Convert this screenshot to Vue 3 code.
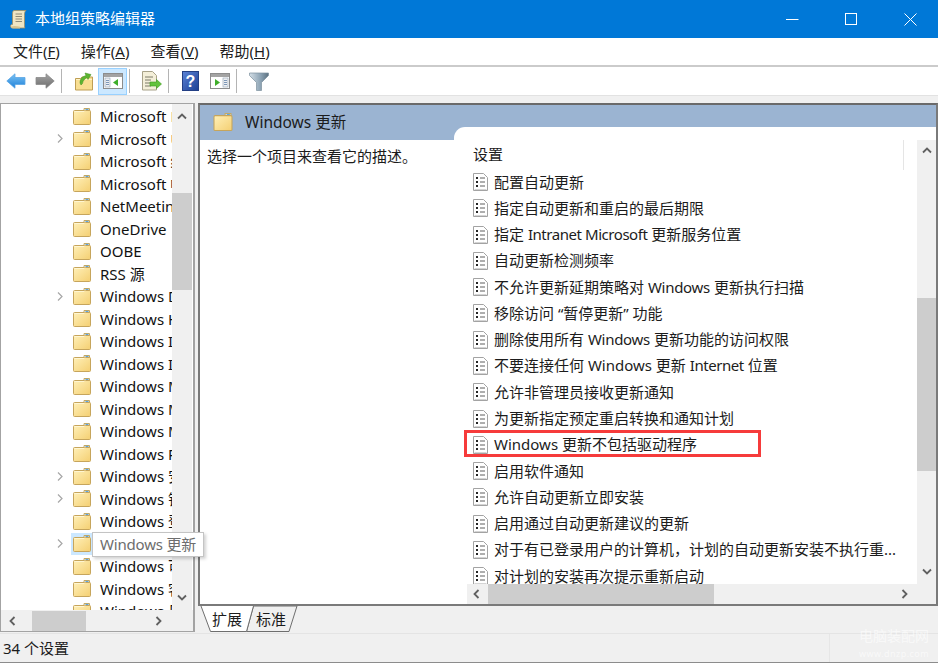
<script setup>
const treeRows = [
  { t: 'Microsoft Edge' }, { t: 'Microsoft User Experience', c: 1 }, { t: 'Microsoft 终结点' }, { t: 'Microsoft 帐户' },
  { t: 'NetMeeting' }, { t: 'OneDrive' }, { t: 'OOBE' }, { t: 'RSS 源' },
  { t: 'Windows Defender', c: 1 }, { t: 'Windows Hello' }, { t: 'Windows Ink' }, { t: 'Windows Installer' },
  { t: 'Windows Mail' }, { t: 'Windows Media' }, { t: 'Windows Messenger' }, { t: 'Windows PowerShell' },
  { t: 'Windows 安全中心', c: 1 }, { t: 'Windows 错误报告', c: 1 }, { t: 'Windows 登录选项' },
  { t: 'Windows 更新', c: 1, hover: 1 }, { t: 'Windows 可靠性' }, { t: 'Windows 客户体验' }, { t: 'Windows 日历' },
]
const items = [
  { a: '配置自动更新' },
  { a: '指定自动更新和重启的最后期限' },
  { a: '指定 ', tight: 'Intranet Microsoft', b: ' 更新服务位置' },
  { a: '自动更新检测频率' },
  { a: '不允许更新延期策略对 ', tight: 'Windows', b: ' 更新执行扫描' },
  { a: '移除访问 “暂停更新” 功能' },
  { a: '删除使用所有 ', tight: 'Windows', b: ' 更新功能的访问权限' },
  { a: '不要连接任何 Windows 更新 ', tight: 'Internet', b: ' 位置' },
  { a: '允许非管理员接收更新通知' },
  { a: '为更新指定预定重启转换和通知计划' },
  { a: 'Windows 更新不包括驱动程序' },
  { a: '启用软件通知' },
  { a: '允许自动更新立即安装' },
  { a: '启用通过自动更新建议的更新' },
  { a: '对于有已登录用户的计算机，计划的自动更新安装不执行重...' },
  { a: '对计划的安装再次提示重新启动' },
]
</script>

<template>
  <div class="win">
    <header class="title">
      <svg class="t-icon" width="18" height="21" viewBox="0 0 18 21">
        <path d="M4 1.500h12c-1.500 1-1.500 3-1.500 5v9c0 2 0 3 .5 3.500H3c-2 0-2.500-1-2.500-2 0-.8.7-1.500 1.500-1.500h.5V5C2.500 3 3 1.500 4 1.500z" fill="#efe5c3" stroke="#a08e62" stroke-width=".8"/>
        <path d="M1 17.500c3-1 6-.5 9 .3v1.700H3c-1.500 0-2-1-2-2z" fill="#d6c48f"/>
        <path d="M5.500 5h6.500M5.500 7.500h6.500M5.500 10h6.500M5.500 12.500h6.500" stroke="#8f8a78" stroke-width="1"/>
      </svg>
      <span class="t-text">本地组策略编辑器</span>
      <div class="controls">
        <svg width="13" height="13" viewBox="0 0 13 13"><path d="M0 6.500h12.500" stroke="#fff" stroke-width="1"/></svg>
        <svg width="13" height="13" viewBox="0 0 13 13"><rect x=".5" y=".5" width="11" height="11" fill="none" stroke="#fff"/></svg>
        <svg width="13" height="13" viewBox="0 0 13 13"><path d="M.5.500l12 12M12.500.500l-12 12" stroke="#fff" stroke-width="1"/></svg>
      </div>
    </header>

    <nav class="menu">
      <span>文件(<u>F</u>)</span><span>操作(<u>A</u>)</span><span>查看(<u>V</u>)</span><span>帮助(<u>H</u>)</span>
    </nav>

    <div class="toolbar">
      <div class="btn">
        <svg width="20" height="16" viewBox="0 0 20 16"><defs><linearGradient id="ba" x1="0" y1="0" x2="0" y2="1"><stop offset="0" stop-color="#7cc4f5"/><stop offset="1" stop-color="#1c7fd8"/></linearGradient></defs><path d="M.8 8L9 .8V4.500h10v7H9v3.700z" fill="url(#ba)" stroke="#5aa6e4" stroke-width=".8" stroke-linejoin="round"/></svg>
      </div>
      <div class="btn">
        <svg width="20" height="16" viewBox="0 0 20 16"><defs><linearGradient id="bf" x1="0" y1="0" x2="0" y2="1"><stop offset="0" stop-color="#a5a5a5"/><stop offset="1" stop-color="#6c6c6c"/></linearGradient></defs><path d="M19.200 8L11 .8V4.500H1v7h10v3.700z" fill="url(#bf)" stroke="#8a8a8a" stroke-width=".8" stroke-linejoin="round"/></svg>
      </div>
      <i class="sep"></i>
      <div class="btn">
        <svg width="18" height="19" viewBox="0 0 18 19"><path d="M.5 6.500h5l1.500-1.500h10.500v13H.5z" fill="#f8de92" stroke="#bf9e54"/><path d="M1 7.500h16" stroke="#fff3c6"/><path d="M5 11C5 6 8 4.500 11 3.500L10 1l6 1.500-3 5-1-2C10 7 8 8 7.500 11.500L6 13z" fill="#5cb531" stroke="#3d8d1d" stroke-width=".5"/></svg>
      </div>
      <div class="btn on">
        <svg width="20" height="16" viewBox="0 0 20 16"><rect x=".5" y=".5" width="19" height="15" fill="#fff" stroke="#8c8c8c"/><rect x="1" y="1" width="18" height="3" fill="#a3a3a3"/><rect x="2" y="5" width="5" height="9" fill="#eef0f2" stroke="#8fa0b3" stroke-width=".6"/><path d="M3 7.500h3M3 9.500h3M3 11.500h3" stroke="#7d97b8"/><path d="M15 6v7l-5-3.500z" fill="#3fae2a"/></svg>
      </div>
      <i class="sep"></i>
      <div class="btn">
        <svg width="21" height="20" viewBox="0 0 21 20"><path d="M1.500.500h10l4 4v14.500h-14z" fill="#f4efd9" stroke="#a8a289"/><path d="M4 6h8M4 9h6M4 12h5M4 15h6" stroke="#7d7a68"/><path d="M20.500 13l-5-4.500v2.500H9v4h6.500v2.500z" fill="#62c23b" stroke="#3e9a1f" stroke-width=".6"/></svg>
      </div>
      <i class="sep"></i>
      <div class="btn">
        <svg width="17" height="20" viewBox="0 0 17 20"><defs><linearGradient id="hp" x1="0" y1="0" x2="1" y2="1"><stop offset="0" stop-color="#5b83d6"/><stop offset="1" stop-color="#1c3f93"/></linearGradient></defs><rect x=".5" y=".5" width="16" height="19" fill="url(#hp)" stroke="#233f84"/><text x="8.500" y="15.500" text-anchor="middle" font-family="Liberation Sans" font-weight="700" font-size="16" fill="#fff">?</text></svg>
      </div>
      <div class="btn">
        <svg width="20" height="16" viewBox="0 0 20 16"><rect x=".5" y=".5" width="19" height="15" fill="#fff" stroke="#8c8c8c"/><rect x="1" y="1" width="18" height="3" fill="#a3a3a3"/><rect x="13" y="5" width="5" height="9" fill="#eef0f2" stroke="#8fa0b3" stroke-width=".6"/><path d="M14 7.500h3M14 9.500h3M14 11.500h3" stroke="#7d97b8"/><path d="M5 6v7l5-3.500z" fill="#3fae2a"/></svg>
      </div>
      <i class="sep"></i>
      <div class="btn">
        <svg width="20" height="19" viewBox="0 0 20 19"><defs><linearGradient id="fl" x1="0" y1="0" x2="1" y2="0"><stop offset="0" stop-color="#d3dee6"/><stop offset=".6" stop-color="#8ba2b3"/><stop offset="1" stop-color="#5c7180"/></linearGradient></defs><path d="M.5 1h19v2.500L12.500 10.500v8h-5v-8L.5 3.500z" fill="url(#fl)" stroke="#7d909e" stroke-width=".7"/></svg>
      </div>
    </div>

    <div class="band"></div>

    <main class="main">
      <section class="left">
        <div class="left-top">
          <div class="tree">
            <div v-for="r in treeRows" :key="r.t" class="row">
              <span class="chev-box">
                <svg v-if="r.c" width="6" height="9" viewBox="0 0 6 9"><path d="M1 .5l4 4-4 4" fill="none" stroke="#a6a6a6" stroke-width="1.200"/></svg>
              </span>
              <span class="fw" :class="{ hot: r.hover }">
                <svg width="18" height="17" viewBox="0 0 18 17"><defs><linearGradient id="fd" x1="0" y1="0" x2="1" y2="1"><stop offset="0" stop-color="#fff0b8"/><stop offset="1" stop-color="#f4cf72"/></linearGradient></defs><path d="M11 .5h5.500v3H11z" fill="#e9eef2" stroke="#c5a860"/><path d="M12.500 1.500h3" stroke="#5fa6dc" stroke-width="1.200"/><rect x=".5" y="2.500" width="17" height="14" rx="1" fill="url(#fd)" stroke="#c6a55c"/><path d="M1.500 3.500h9.500l1-1" fill="none" stroke="#fff6d2"/></svg>
              </span>
              <span class="row-t">{{ r.t }}</span>
            </div>
          </div>
          <div class="vbar">
            <svg class="ar-up" width="10" height="7" viewBox="0 0 10 7"><path d="M1 5.500l4-4 4 4" fill="none" stroke="#606060" stroke-width="1.800"/></svg>
            <div class="vthumb-l"></div>
            <svg class="ar-dn-l" width="10" height="7" viewBox="0 0 10 7"><path d="M1 1.500l4 4 4-4" fill="none" stroke="#606060" stroke-width="1.800"/></svg>
          </div>
        </div>
        <div class="hbar-l">
          <svg class="ar-l" width="7" height="10" viewBox="0 0 7 10"><path d="M5.500 1l-4 4 4 4" fill="none" stroke="#606060" stroke-width="1.800"/></svg>
          <div class="hthumb-l"></div>
          <svg class="ar-r" width="7" height="10" viewBox="0 0 7 10"><path d="M1.500 1l4 4-4 4" fill="none" stroke="#606060" stroke-width="1.800"/></svg>
        </div>
      </section>

      <section class="pane">
        <div class="box">
          <div class="head">
            <svg class="head-fold" width="20" height="18" viewBox="0 0 18 17"><defs><linearGradient id="fh" x1="0" y1="0" x2="1" y2="1"><stop offset="0" stop-color="#fff0b8"/><stop offset="1" stop-color="#f4cf72"/></linearGradient></defs><path d="M11 .5h5.500v3H11z" fill="#e9eef2" stroke="#c5a860"/><path d="M12.500 1.500h3" stroke="#5fa6dc" stroke-width="1.200"/><rect x=".5" y="2.500" width="17" height="14" rx="1" fill="url(#fh)" stroke="#c6a55c"/></svg>
            <span class="head-t">Windows 更新</span>
            <div class="head-tab"></div>
          </div>
          <div class="body">
            <div class="desc">选择一个项目来查看它的描述。</div>
            <div class="set">
              <div class="set-top">
                <div class="list">
                  <div class="list-h"><span>设置</span><i class="hdiv"></i></div>
                  <div v-for="(it, i) in items" :key="i" class="item">
                    <svg width="15" height="18" viewBox="0 0 15 18"><path d="M.5.500h10l4 4v13H.5z" fill="#fff" stroke="#a3a3a3"/><path d="M1.500 16.500h12" stroke="#d4d4d4"/><path d="M3 5h2M3 9h2M3 13h2" stroke="#262626" stroke-width="1.800"/><path d="M7 5h5M7 9h5M7 13h5" stroke="#5f5f5f"/></svg>
                    <span class="it-t">{{ it.a }}<span v-if="it.tight" :class="it.tight === 'Windows' ? 'snug' : 'tight'">{{ it.tight }}</span>{{ it.b }}</span>
                    <i v-if="i === 10" class="mark"></i>
                  </div>
                </div>
                <div class="vbar-r">
                  <svg class="ar-up2" width="10" height="7" viewBox="0 0 10 7"><path d="M1 5.500l4-4 4 4" fill="none" stroke="#606060" stroke-width="1.800"/></svg>
                  <div class="vthumb-r"></div>
                  <svg class="ar-dn-r" width="10" height="7" viewBox="0 0 10 7"><path d="M1 1.500l4 4 4-4" fill="none" stroke="#606060" stroke-width="1.800"/></svg>
                </div>
              </div>
              <div class="hbar-r">
                <svg class="ar-l2" width="7" height="10" viewBox="0 0 7 10"><path d="M5.500 1l-4 4 4 4" fill="none" stroke="#606060" stroke-width="1.800"/></svg>
                <div class="hthumb-r"></div>
                <svg class="ar-r2" width="7" height="10" viewBox="0 0 7 10"><path d="M1.500 1l4 4-4 4" fill="none" stroke="#606060" stroke-width="1.800"/></svg>
              </div>
            </div>
          </div>
        </div>
        <div class="tabs">
          <svg class="tab-shape" width="104" height="26" viewBox="0 0 104 26">
            <path d="M90 25.500H47.500L54.500 0H98z" fill="#f0f0f0" stroke="#6e6e6e"/>
            <path d="M2 0l9.500 25.500h36L54.500 0" fill="#fff" stroke="#6e6e6e"/>
          </svg>
          <span class="tab">扩展</span>
          <span class="tab">标准</span>
        </div>
      </section>

      <div class="tip">Windows 更新</div>
    </main>

    <footer class="status">
      <div class="st-main">34 个设置</div>
      <div class="wm"><div class="wm-a">电脑装配网</div><div class="wm-b">www.dnzp.com</div></div>
    </footer>
  </div>
</template>

<style scoped>
.win {
  width: 938px;
  height: 663px;
  overflow: hidden;
  background: #f0f0f0;
  color: #1c1c1c;
  font-family: "Noto Sans", "Noto Sans CJK SC", sans-serif;
  font-size: 15px;
  display: flex;
  flex-direction: column;
}
.title {
  height: 38px;
  flex: none;
  background: #0078d7;
  color: #fff;
  display: flex;
  align-items: center;
  padding-left: 10px;
}
.t-icon { margin-right: 7px; }
.t-text { line-height: 36px; padding-bottom: 2px; }
.controls {
  margin-left: auto;
  margin-right: 21px;
  display: flex;
  gap: 46px;
}
.menu {
  height: 27px;
  flex: none;
  background: #fff;
  display: flex;
  align-items: center;
  gap: 21px;
  padding-left: 13px;
  line-height: 27px;
}
.toolbar {
  height: 30px;
  flex: none;
  box-sizing: border-box;
  background: #fff;
  border-top: 2px solid #cbcbcb;
  display: flex;
  align-items: center;
  padding-left: 1px;
}
.btn {
  width: 29px;
  height: 27px;
  box-sizing: border-box;
  display: flex;
  align-items: center;
  justify-content: center;
}
.btn.on {
  background: #cce8ff;
  border: 1px solid #99d1ff;
}
.sep {
  width: 1px;
  height: 24px;
  background: #b4b4b4;
  margin: 0 7px 0 2px;
}
.band {
  height: 8px;
  flex: none;
  box-sizing: border-box;
  border-top: 1px solid #e2e2e2;
  background: #f0f0f0;
}
.main {
  position: relative;
  height: 530px;
  flex: none;
  display: flex;
  gap: 3px;
}
.left {
  width: 195px;
  height: 529px;
  box-sizing: border-box;
  flex: none;
  border: 1px solid #a3a3a3;
  border-right-width: 2px;
  background: #fff;
  display: flex;
  flex-direction: column;
}
.left-top {
  height: 506px;
  flex: none;
  display: flex;
}
.tree {
  width: 171px;
  flex: none;
  overflow: hidden;
  padding-top: 1px;
  box-sizing: border-box;
}
.row {
  height: 22.500px;
  display: flex;
  align-items: center;
  padding-left: 56px;
  white-space: nowrap;
  line-height: 22px;
}
.chev-box {
  width: 14px;
  flex: none;
  display: flex;
  align-items: center;
  box-sizing: border-box;
}
.fw {
  width: 22px;
  height: 22px;
  flex: none;
  display: flex;
  align-items: center;
  justify-content: center;
}
.fw.hot { background: #cce8ff; }
.row-t { padding-left: 7px; color: #111; }
.vbar {
  width: 20px;
  flex: none;
  background: #f0f0f0;
  display: flex;
  flex-direction: column;
  align-items: center;
}
.ar-up { margin-top: 9px; flex: none; }
.vthumb-l {
  width: 20px;
  height: 97px;
  flex: none;
  margin-top: 73px;
  background: #cdcdcd;
}
.ar-dn-l { margin-top: 304px; flex: none; }
.hbar-l {
  height: 21px;
  flex: none;
  background: #f0f0f0;
  display: flex;
  align-items: center;
}
.ar-l { margin-left: 8px; flex: none; }
.hthumb-l {
  width: 54px;
  height: 20px;
  flex: none;
  margin-left: 16px;
  background: #cdcdcd;
}
.ar-r { margin-left: 69px; flex: none; }
.pane {
  width: 740px;
  flex: none;
  display: flex;
  flex-direction: column;
}
.box {
  height: 503px;
  flex: none;
  box-sizing: border-box;
  border: 2px solid #7a7a7a;
  border-top-color: #6a6a6a;
  background: #fff;
  display: flex;
  flex-direction: column;
}
.head {
  height: 35px;
  flex: none;
  background: #9bb4d2;
  display: flex;
  align-items: flex-start;
}
.head-fold { margin: 8px 0 0 13px; flex: none; }
.head-t { margin: 6px 0 0 12px; line-height: 22px; width: 209px; flex: none; font-size: 15.500px; }
.head-tab {
  height: 13px;
  flex: 1;
  align-self: flex-end;
  background: #fff;
  border-top-left-radius: 11px;
}
.body {
  height: 464px;
  flex: none;
  display: flex;
}
.desc {
  width: 267px;
  flex: none;
  padding: 6px 0 0 7px;
  box-sizing: border-box;
  line-height: 20px;
}
.set {
  width: 469px;
  flex: none;
  display: flex;
  flex-direction: column;
}
.set-top {
  height: 444px;
  flex: none;
  display: flex;
}
.list {
  width: 450px;
  flex: none;
  clip-path: inset(0 0 0 -10px);
}
.list-h {
  height: 29px;
  padding-left: 6px;
  line-height: 28px;
  position: relative;
}
.hdiv {
  position: absolute;
  left: 436px;
  top: 0;
  width: 1px;
  height: 30px;
  background: #e5e5e5;
}
.item {
  position: relative;
  height: 26.270px;
  display: flex;
  align-items: center;
  gap: 6px;
  padding-left: 6px;
  white-space: nowrap;
}
.it-t { padding-bottom: 2px; }
.tight { letter-spacing: -.45px; }
.snug { letter-spacing: -.28px; }
.mark {
  position: absolute;
  left: -3px;
  top: -2px;
  width: 297px;
  height: 27px;
  box-sizing: border-box;
  border: 3px solid #f63b3b;
}
.vbar-r {
  width: 19px;
  flex: none;
  background: #f0f0f0;
  display: flex;
  flex-direction: column;
  align-items: center;
}
.ar-up2 { margin-top: 7px; flex: none; }
.vthumb-r {
  width: 19px;
  height: 173px;
  flex: none;
  margin-top: 144px;
  background: #cdcdcd;
}
.ar-dn-r { margin-top: 97px; flex: none; }
.hbar-r {
  height: 20px;
  flex: none;
  background: #f0f0f0;
  display: flex;
  align-items: center;
}
.ar-l2 { margin-left: 6px; flex: none; }
.hthumb-r {
  width: 226px;
  height: 20px;
  flex: none;
  margin-left: 8px;
  background: #cdcdcd;
}
.ar-r2 { margin-left: 187px; flex: none; }
.tabs {
  position: relative;
  height: 26px;
  flex: none;
  display: flex;
  gap: 14px;
  padding-left: 14px;
  line-height: 26px;
}
.tab-shape { position: absolute; left: 1px; top: 0; }
.tab { position: relative; }
.tip {
  position: absolute;
  left: 92px;
  top: 429px;
  width: 112px;
  height: 25px;
  box-sizing: border-box;
  background: #fff;
  border: 1px solid #c4c4c4;
  box-shadow: 2px 2px 3px rgba(0, 0, 0, .18);
  color: #6d6d6d;
  padding-left: 7px;
  line-height: 22px;
  white-space: nowrap;
  letter-spacing: -.18px;
}
.status {
  position: relative;
  height: 30px;
  flex: none;
  box-sizing: border-box;
  border-top: 1px solid #e4e4e4;
  border-bottom: 1px solid #8c8c8c;
  background: #f0f0f0;
  display: flex;
}
.st-main {
  width: 830px;
  box-sizing: border-box;
  border-right: 1px solid #e6e6e6;
  padding-left: 3px;
  line-height: 29px;
}
.wm {
  position: absolute;
  left: 859px;
  top: -7px;
  width: 70px;
  color: rgba(255, 255, 255, .6);
  white-space: nowrap;
  text-align: center;
}
.wm-a { font-size: 14px; line-height: 18px; }
.wm-b { font-size: 9px; letter-spacing: .45px; line-height: 14px; margin-top: 2px; }
</style>

<style>
html, body { margin: 0; overflow: hidden; }
</style>
